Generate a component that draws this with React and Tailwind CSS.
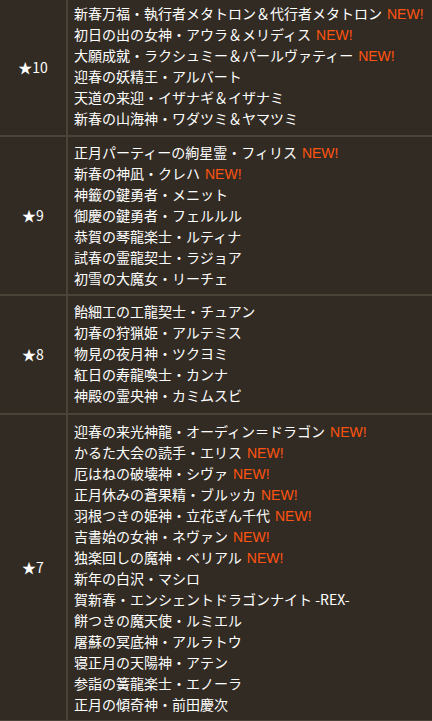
const sections = [
  {
    rank: "★10",
    pad: "pt-[3px] pb-[6px]",
    items: [
      ["新春万福・執行者メタトロン＆代行者メタトロン", true],
      ["初日の出の女神・アウラ＆メリディス", true],
      ["大願成就・ラクシュミー＆パールヴァティー", true],
      ["迎春の妖精王・アルバート", false],
      ["天道の来迎・イザナギ＆イザナミ", false],
      ["新春の山海神・ワダツミ＆ヤマツミ", false],
    ],
  },
  {
    rank: "★9",
    pad: "py-[5px]",
    items: [
      ["正月パーティーの絢星霊・フィリス", true],
      ["新春の神凪・クレハ", true],
      ["神籤の鍵勇者・メニット", false],
      ["御慶の鍵勇者・フェルルル", false],
      ["恭賀の琴龍楽士・ルティナ", false],
      ["試春の霊龍契士・ラジョア", false],
      ["初雪の大魔女・リーチェ", false],
    ],
  },
  {
    rank: "★8",
    pad: "pt-[5px] pb-[7px]",
    items: [
      ["飴細工の工龍契士・チュアン", false],
      ["初春の狩猟姫・アルテミス", false],
      ["物見の夜月神・ツクヨミ", false],
      ["紅日の寿龍喚士・カンナ", false],
      ["神殿の霊央神・カミムスビ", false],
    ],
  },
  {
    rank: "★7",
    pad: "pt-[6px] pb-[5px]",
    items: [
      ["迎春の来光神龍・オーディン＝ドラゴン", true],
      ["かるた大会の読手・エリス", true],
      ["厄はねの破壊神・シヴァ", true],
      ["正月休みの蒼果精・ブルッカ", true],
      ["羽根つきの姫神・立花ぎん千代", true],
      ["吉書始の女神・ネヴァン", true],
      ["独楽回しの魔神・ベリアル", true],
      ["新年の白沢・マシロ", false],
      ["賀新春・エンシェントドラゴンナイト -REX-", false],
      ["餅つきの魔天使・ルミエル", false],
      ["屠蘇の冥底神・アルラトウ", false],
      ["寝正月の天陽神・アテン", false],
      ["参詣の簧龍楽士・エノーラ", false],
      ["正月の傾奇神・前田慶次", false],
    ],
  },
];

export default function App() {
  return (
    <div
      className="w-[432px] h-[721px] overflow-hidden bg-[#322b23] text-white text-[14px]"
      style={{ fontFamily: '"Noto Sans CJK JP", "Noto Sans", sans-serif' }}
    >
      {sections.map((s, i) => (
        <div
          key={s.rank}
          className={`flex ${i === 0 ? "" : "border-t-2 border-[#4b4238]"} ${i === sections.length - 1 ? "border-b-2 border-[#4b4238]" : ""}`}
        >
          <div className="w-[68px] shrink-0 flex items-center justify-center border-r-2 border-[#4b4238] leading-[21px]">
            {s.rank}
          </div>
          <div className={`flex-1 pl-[6px] ${s.pad}`}>
            {s.items.map(([name, isNew]) => (
              <div key={name} className="h-[21px] whitespace-nowrap leading-[21px]">
                {name}
                {isNew && (
                  <span
                    className="ml-[5px] text-[#ff5410] leading-[21px] align-baseline"
                    style={{ fontFamily: '"Liberation Sans", Arial, sans-serif' }}
                  >
                    NEW!
                  </span>
                )}
              </div>
            ))}
          </div>
        </div>
      ))}
    </div>
  );
}
